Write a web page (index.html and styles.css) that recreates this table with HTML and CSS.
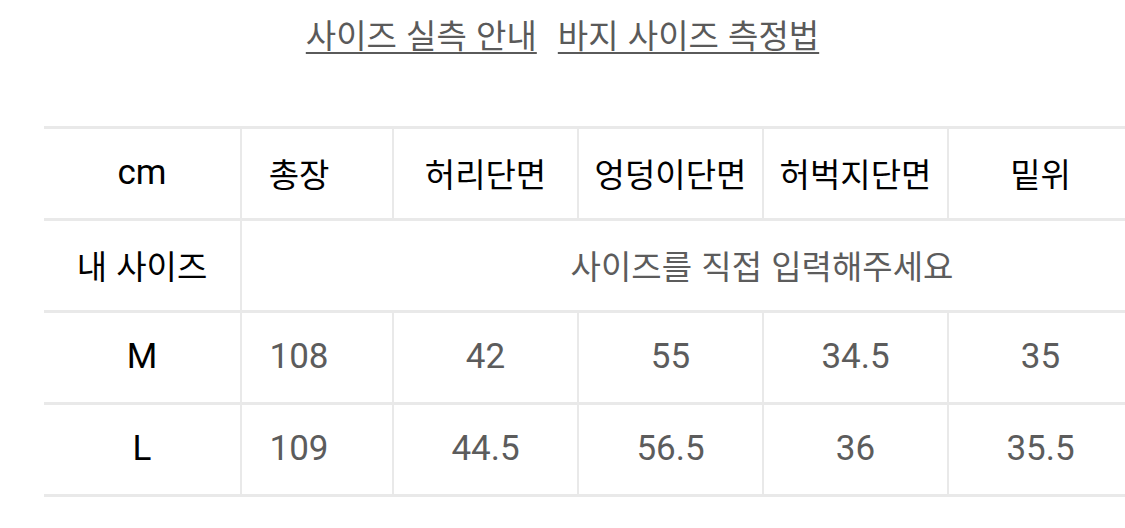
FILE: index.html
```html
<!DOCTYPE html>
<html lang="ko">
<head>
<meta charset="utf-8">
<title>사이즈 실측 안내</title>
<link rel="stylesheet" href="styles.css">
</head>
<body>
<div class="page">
  <nav class="links">
    <a class="link" href="#">사이즈 실측 안내</a>
    <a class="link" href="#">바지 사이즈 측정법</a>
  </nav>
  <div class="table">
    <div class="cell head lat first">cm</div>
    <div class="cell head c2">총장</div>
    <div class="cell head">허리단면</div>
    <div class="cell head">엉덩이단면</div>
    <div class="cell head">허벅지단면</div>
    <div class="cell head">밑위</div>

    <div class="cell head first">내 사이즈</div>
    <div class="cell span">사이즈를 직접 입력해주세요</div>

    <div class="cell head lat first">M</div>
    <div class="cell val c2">108</div>
    <div class="cell val">42</div>
    <div class="cell val">55</div>
    <div class="cell val">34.5</div>
    <div class="cell val">35</div>

    <div class="cell head lat first">L</div>
    <div class="cell val c2">109</div>
    <div class="cell val">44.5</div>
    <div class="cell val">56.5</div>
    <div class="cell val">36</div>
    <div class="cell val">35.5</div>
  </div>
</div>
</body>
</html>
```
FILE: styles.css
```css
html, body {
  margin: 0;
  padding: 0;
  background: #ffffff;
  overflow: hidden;
}
body {
  font-family: "Roboto", "Noto Sans CJK KR", sans-serif;
  width: 1125px;
  height: 528px;
}
.page {
  display: flex;
  flex-direction: column;
}
.links {
  display: flex;
  justify-content: center;
  gap: 21px;
  padding-top: 14px;
  height: 110px;
  box-sizing: border-box;
}
.link {
  font-family: "Noto Sans CJK KR", sans-serif;
  font-size: 33px;
  line-height: 40px;
  color: #5a5a5a;
  text-decoration: underline;
  text-decoration-thickness: 2px;
  text-underline-offset: 4px;
  text-decoration-color: #5a5a5a;
}
.table {
  margin-left: 44px;
  width: 1088px;
  display: grid;
  grid-template-columns: 196px 152px 185px 185px 185px 185px;
  grid-auto-rows: 92px;
  border-top: 3px solid #e9e9e9;
  margin-top: 16px;
}
.cell {
  box-sizing: border-box;
  display: flex;
  align-items: center;
  justify-content: center;
  border-bottom: 3px solid #e9e9e9;
  border-left: 2px solid #e9e9e9;
  font-size: 33px;
  padding-bottom: 2px;
}
.cell.first {
  border-left: none;
}
.head {
  color: #000000;
  font-family: "Noto Sans CJK KR", sans-serif;
  font-weight: 400;
}
.head.lat {
  font-family: "Roboto", "Noto Sans CJK KR", sans-serif;
  font-weight: 400;
  font-size: 35px;
}
.val {
  color: #5c5c5c;
  font-size: 35px;
}
.c2 {
  padding-right: 36px;
}
.span {
  grid-column: 2 / span 5;
  color: #5c5c5c;
  font-family: "Noto Sans CJK KR", sans-serif;
  padding-left: 150px;
}
```
